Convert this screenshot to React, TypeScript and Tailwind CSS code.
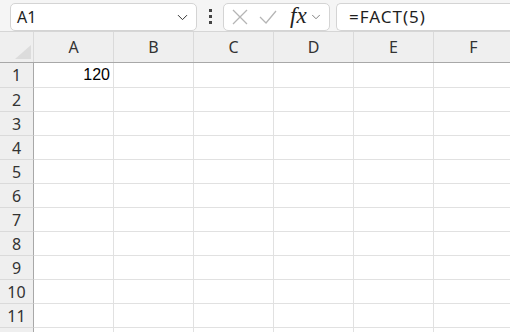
import { ChevronDown } from "lucide-react"

const cols = ["A", "B", "C", "D", "E", "F"]
const rows = [1, 2, 3, 4, 5, 6, 7, 8, 9, 10, 11, 12]

const uiFont = { fontFamily: '"Noto Sans", "Open Sans", sans-serif' }

const NameBox = () => (
    <div className="ml-[10px] mt-[3px] h-[28px] w-[187px] flex items-center justify-between rounded-[5px] border border-[#d4d4d4] bg-white pl-[6px] pr-[5px]">
        <span className="text-[16px] text-[#1f1f1f]">A1</span>
        <ChevronDown className="w-[17px] h-[17px] text-[#333]" strokeWidth={1.4} />
    </div>
)

const Dots = () => (
    <div className="w-[26px] h-[32px] flex flex-col items-center justify-center gap-[3px]">
        <span className="w-[3px] h-[3px] bg-[#444]" />
        <span className="w-[3px] h-[3px] bg-[#444]" />
        <span className="w-[3px] h-[3px] bg-[#444]" />
    </div>
)

const FuncBox = () => (
    <div className="mt-[3px] h-[28px] w-[107px] flex items-center rounded-[5px] border border-[#d4d4d4] bg-white pl-[7px]">
        <svg width="18" height="18" viewBox="0 0 18 18" className="mr-[10px]">
            <path d="M2 2 L16 16 M16 2 L2 16" stroke="#b5b5b5" strokeWidth="1.3" fill="none" />
        </svg>
        <svg width="18" height="18" viewBox="0 0 18 18" className="mr-[13px]">
            <path d="M1 9 L7 15 L17 3" stroke="#b5b5b5" strokeWidth="1.3" fill="none" />
        </svg>
        <span className="text-[23px] italic text-[#222] leading-none -mt-[3px]" style={{ fontFamily: '"Liberation Serif", serif' }}>fx</span>
        <ChevronDown className="ml-[2px] w-[14px] h-[14px] text-[#666]" strokeWidth={1.4} />
    </div>
)

const FormulaBox = () => (
    <div className="ml-[6px] mt-[3px] h-[28px] flex-1 flex items-center rounded-l-[5px] border border-r-0 border-[#d4d4d4] bg-white pl-[12px]">
        <span className="text-[17px] tracking-[1px] text-[#1f1f1f]">=FACT(5)</span>
    </div>
)

export default function App() {
    return (
        <div className="w-[510px] h-[332px] overflow-hidden bg-white" style={uiFont}>
            <div className="h-[32px] flex items-start bg-[#f5f5f5] border-b border-[#d6d6d6]">
                <NameBox />
                <Dots />
                <FuncBox />
                <FormulaBox />
            </div>

            <div className="flex h-[31px] bg-[#efefef] border-b border-[#a8a8a8]">
                <div className="w-[34px] shrink-0 border-r border-[#dadada] relative">
                    <svg width="17" height="14" viewBox="0 0 17 14" className="absolute left-[15px] top-[13px]">
                        <path d="M16 0 L16 14 L0 14 Z" fill="#dcdcdc" />
                    </svg>
                </div>
                {cols.map(c => (
                    <div key={c} className="w-[80px] shrink-0 flex items-center justify-center border-r border-[#dadada] text-[16px] text-[#333]">
                        {c}
                    </div>
                ))}
            </div>

            {rows.map(r => (
                <div key={r} className={`flex ${r === 1 ? "h-[25px]" : "h-[24px]"}`}>
                    <div className="w-[34px] shrink-0 flex items-center justify-center bg-[#efefef] border-r border-[#a8a8a8] border-b border-b-[#dadada] text-[16px] text-[#333]">
                        {r < 12 ? r : ""}
                    </div>
                    {cols.map(c => (
                        <div key={c} className="w-[80px] shrink-0 flex items-center justify-end pr-[3px] border-r border-b border-[#e1e1e1] text-[16px] text-black" style={{ fontFamily: '"Liberation Sans", sans-serif' }}>
                            {r === 1 && c === "A" ? "120" : ""}
                        </div>
                    ))}
                </div>
            ))}
        </div>
    )
}
